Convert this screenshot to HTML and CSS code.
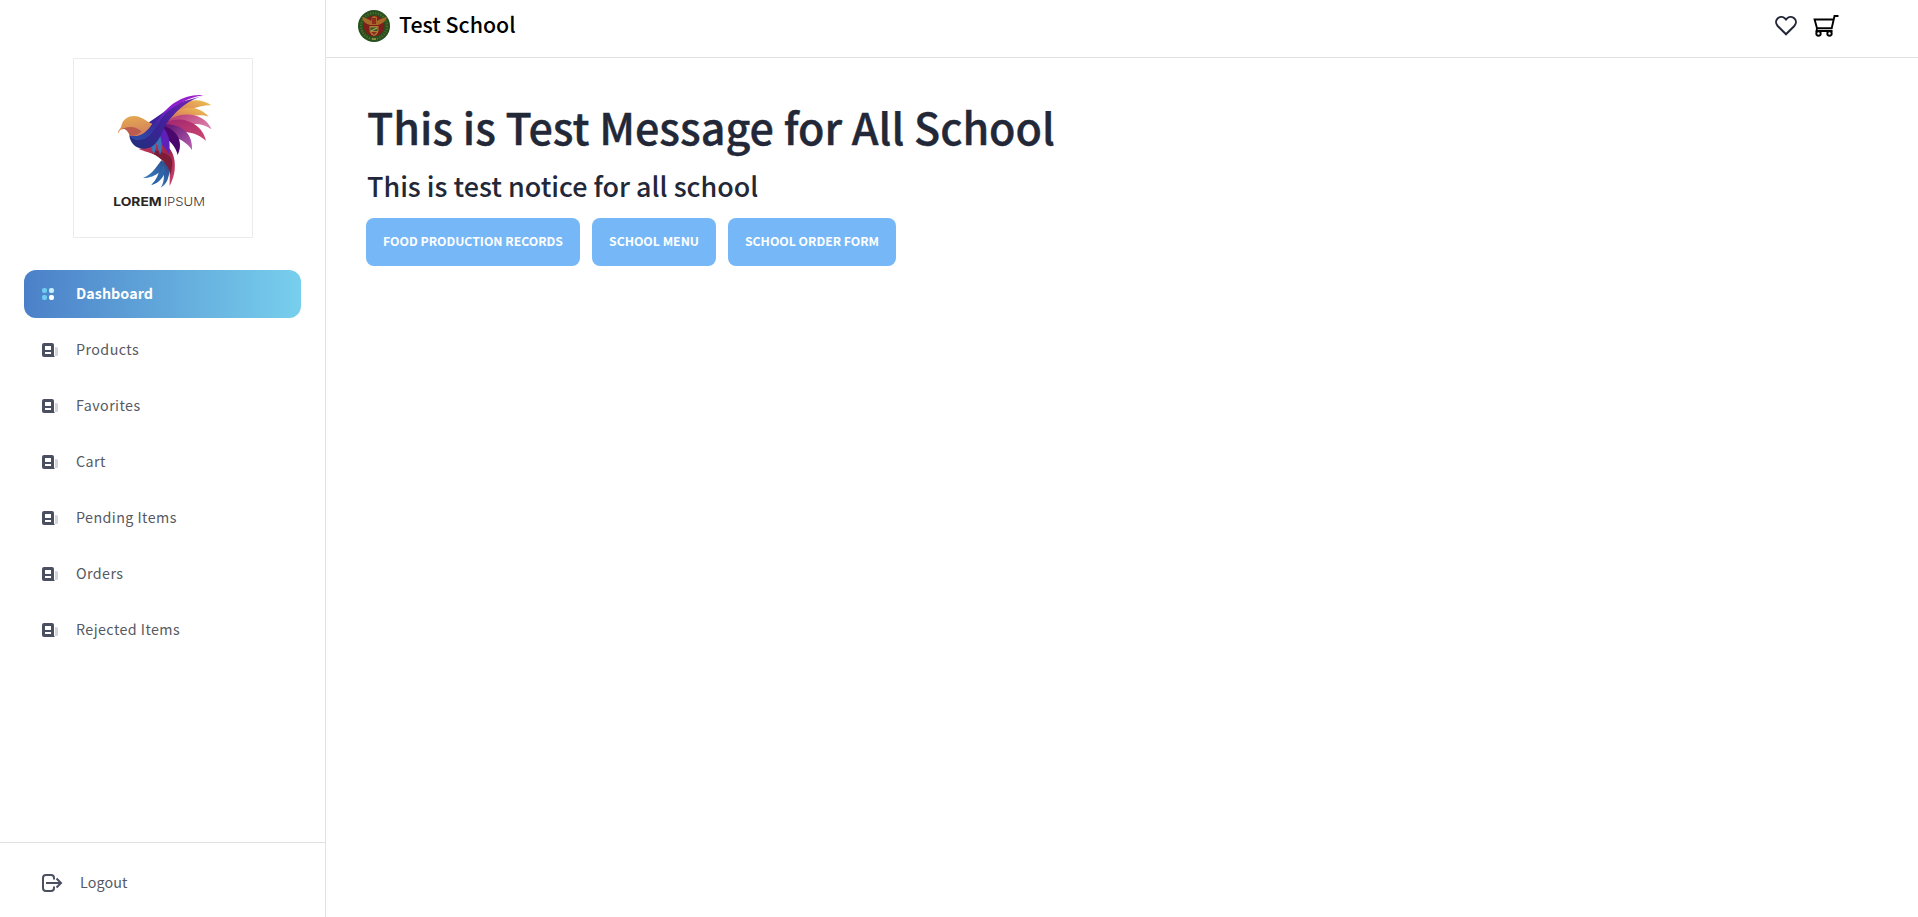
FILE: index.html
```html
<!DOCTYPE html>
<html lang="en">
<head>
<meta charset="utf-8">
<title>Test School</title>
<link rel="stylesheet" href="styles.css">
</head>
<body>
<svg class="defs" width="0" height="0">
  <symbol id="doc" viewBox="0 0 16 14">
    <path fill="#d5d5e0" d="M13 4h1.500A1.500 1.500 0 0 1 16 5.500v6a1.500 1.500 0 0 1-1.500 1.500H13z"/>
    <path fill="#4a5060" fill-rule="evenodd" d="M2 0h8a2 2 0 0 1 2 2v10q0 1.500 1 2H2a2 2 0 0 1-2-2V2a2 2 0 0 1 2-2zM3 3v4h6V3zM3 9v2h6V9z"/>
  </symbol>
</svg>
<div class="app">
  <aside class="sidebar">
    <div class="logo">
      <svg viewBox="39 24 540 540" width="180" height="180">
        <defs>
          <linearGradient id="head" x1="0" y1="0" x2="0.3" y2="1"><stop offset="0" stop-color="#e6ac50"/><stop offset="1" stop-color="#d4825c"/></linearGradient>
          <linearGradient id="sweep" x1="0" y1="1" x2="1" y2="0"><stop offset="0" stop-color="#2c50a4"/><stop offset=".35" stop-color="#3a2ca0"/><stop offset=".6" stop-color="#8a1ed0"/><stop offset="1" stop-color="#a01ec8"/></linearGradient>
          <linearGradient id="shade" x1="0" y1="1" x2="1" y2="0"><stop offset="0" stop-color="#20307c"/><stop offset=".5" stop-color="#42209c"/><stop offset="1" stop-color="#7a28b8"/></linearGradient>
          <linearGradient id="gold" x1="0" y1="1" x2="1" y2="0"><stop offset="0" stop-color="#c64c68"/><stop offset=".6" stop-color="#e39a58"/><stop offset="1" stop-color="#edc54e"/></linearGradient>
          <linearGradient id="pink" x1="0" y1="0" x2="1" y2=".5"><stop offset="0" stop-color="#b03068"/><stop offset="1" stop-color="#d878a8"/></linearGradient>
          <linearGradient id="rose" x1="0" y1="0" x2="1" y2="1"><stop offset="0" stop-color="#9c2470"/><stop offset="1" stop-color="#d04870"/></linearGradient>
          <linearGradient id="violet" x1="0" y1="0" x2="1" y2="1"><stop offset="0" stop-color="#5a0c70"/><stop offset="1" stop-color="#b864b0"/></linearGradient>
          <linearGradient id="tail" x1="1" y1="0" x2="0" y2="1"><stop offset="0" stop-color="#284888"/><stop offset="1" stop-color="#3e8cd0"/></linearGradient>
          <linearGradient id="belly" x1="0" y1="0" x2="1" y2="1"><stop offset="0" stop-color="#c83860"/><stop offset=".5" stop-color="#a02448"/><stop offset="1" stop-color="#cc4870"/></linearGradient>
        </defs>
        <path fill="url(#tail)" d="M304 331C288 352 276 374 249 384C270 384 286 376 296 368C290 386 284 394 274 405C294 400 306 386 312 374C312 390 309 402 302 413C320 402 325 386 328 368L328 346Z"/>
        <path fill="#2e64a8" d="M310 345C300 375 288 390 274 405C294 400 308 384 315 361Z"/>
        <path fill="url(#belly)" d="M236 297C260 292 280 272 307 279C335 291 348 322 344 360C341 382 335 396 329 408C328 392 332 377 326 358C315 326 280 310 254 304Z"/>
        <path fill="#7c1c38" d="M278 298C300 306 326 310 334 326C340 340 334 360 332 374C325 345 305 326 278 310Z"/>
        <path fill="url(#gold)" d="M325 205C350 150 412 137 454 166C432 166 408 170 388 182L345 210Z"/>
        <path fill="url(#gold)" d="M315 222C345 165 410 158 446 200C422 192 400 195 380 205L340 225Z"/>
        <path fill="url(#pink)" d="M305 228C345 180 430 180 455 238C430 220 402 219 375 226L330 238Z"/>
        <path fill="url(#rose)" d="M304 226C348 190 425 212 438 272C414 252 392 246 368 246L330 244Z"/>
        <path fill="url(#violet)" d="M303 226C348 214 400 240 396 300C380 278 362 267 340 262L306 240Z"/>
        <path fill="#4a086c" d="M302 228C340 230 376 268 353 315C347 290 332 276 306 252Z"/>
        <path fill="#5e20b8" d="M302 226C326 244 334 280 326 312C314 288 296 276 280 262Z"/>
        <path fill="#3878b8" d="M294 244C307 267 309 295 300 315C296 302 294 288 288 279C289 294 286 306 281 313C274 300 275 285 270 273Z"/>
        <path fill="url(#shade)" d="M208 257C211 282 232 298 254 296C304 292 300 235 336 200C356 177 385 149 430 137L350 160Z"/>
        <path fill="url(#sweep)" d="M207 252C274 272 288 192 346 157C374 140 402 133 430 136C382 143 354 164 325 182C296 204 286 255 250 268C230 274 214 268 207 252Z"/>
        <path fill="url(#head)" d="M174 250C173 241 181 238 184 228C188 208 204 198 222 198C247 199 256 214 277 221C262 246 238 263 212 257C204 249 203 241 194 237C184 236 180 239 174 250Z"/>
        <path fill="#bc5c50" d="M174 250C178 240 190 232 210 231C226 231 236 237 245 244C233 256 222 260 212 257C204 249 203 241 194 237C184 236 180 239 174 250Z"/>
        <text x="160" y="467" class="mark-bold" textLength="145" lengthAdjust="spacingAndGlyphs">LOREM</text>
        <text x="311" y="467" class="mark-thin" textLength="124" lengthAdjust="spacingAndGlyphs">IPSUM</text>
      </svg>
    </div>
    <nav class="menu">
      <a class="item active">
        <svg width="16" height="14" viewBox="0 0 16 14"><rect y="1" width="5" height="5" rx="2" fill="#6ecdf0"/><rect x="7" y="1" width="5" height="5" rx="2" fill="#c4f0fc"/><rect y="8" width="5" height="5" rx="2" fill="#6ecdf0"/><rect x="7" y="8" width="5" height="5" rx="2" fill="#fff"/></svg>
        <span>Dashboard</span></a>
      <a class="item"><svg width="16" height="14"><use href="#doc"/></svg><span>Products</span></a>
      <a class="item"><svg width="16" height="14"><use href="#doc"/></svg><span>Favorites</span></a>
      <a class="item"><svg width="16" height="14"><use href="#doc"/></svg><span>Cart</span></a>
      <a class="item"><svg width="16" height="14"><use href="#doc"/></svg><span>Pending Items</span></a>
      <a class="item"><svg width="16" height="14"><use href="#doc"/></svg><span>Orders</span></a>
      <a class="item"><svg width="16" height="14"><use href="#doc"/></svg><span>Rejected Items</span></a>
    </nav>
    <a class="logout">
      <svg width="21" height="18" viewBox="0 0 21 18" fill="none" stroke="#4a5060" stroke-width="2"><path d="M12 5.500V4Q12 1 9 1H4Q1 1 1 4v10q0 3 3 3h5q3 0 3-3v-1.500M4 9h15M14.500 4.500L19 9l-4.500 4.500"/></svg>
      <span>Logout</span>
    </a>
  </aside>
  <main class="main">
    <header class="topbar">
      <svg width="32" height="32" viewBox="0 0 32 32">
        <circle cx="16" cy="16" r="16" fill="#26501f"/>
        <circle cx="16" cy="16" r="13" fill="none" stroke="#8a8a3c" stroke-width="2.200" stroke-dasharray="1.200 1.500" opacity=".5"/>
        <circle cx="16" cy="16" r="10.500" fill="#7c1f1b"/>
        <path fill="#a8682a" d="M4 7C8 8 11 9 13 11L14 7L16 6L19 7L19 11C21 9 25 8 29 7C27 12 24 14 20 15H12C8 14 5 12 4 7Z"/>
        <path fill="#b07c34" d="M11.500 16h9v5q-1 4-4.500 5q-3.500-1-4.500-5z"/>
        <path fill="#315a30" d="M12.500 17.500h7v3.500h-7z"/>
        <path fill="#8e2c1e" d="M14 8h4v6h-4zM13 22h6l-3 3z"/>
        <path stroke="#d4b35c" fill="none" d="M13 21l6-3M14 29h4"/>
      </svg>
      <span class="school">Test School</span>
      <div class="actions">
        <svg width="22" height="20" viewBox="0 0 22 20" fill="none" stroke="#232838" stroke-width="2"><path d="M11 18.300L2.700 10C.5 7.600.6 4.400 2.600 2.500C4.800.5 8 .5 9.900 2.400L11 3.500l1.100-1.100C14 .5 17.200.5 19.400 2.500c2 1.900 2.100 5.100-.1 7.500z"/></svg>
        <svg width="26" height="22" viewBox="0 0 26 22" fill="none" stroke="#000" stroke-width="1.900"><path d="M25.500 1h-4l-2.800 12.200H4L1.600 4.500H20.500M4 13.200l-.5 2.800h16"/><circle cx="5.500" cy="18.500" r="2.200"/><circle cx="16.500" cy="18.500" r="2.200"/></svg>
      </div>
    </header>
    <section class="content">
      <h1>This is Test Message for All School</h1>
      <h2>This is test notice for all school</h2>
      <div class="buttons">
        <a class="btn b1">FOOD PRODUCTION RECORDS</a>
        <a class="btn b2">SCHOOL MENU</a>
        <a class="btn b3">SCHOOL ORDER FORM</a>
      </div>
    </section>
  </main>
</div>
</body>
</html>
```
FILE: styles.css
```css
* { box-sizing: border-box; }
body { margin: 0; background: #fff; font-family: "Noto Sans CJK SC", "Noto Sans", sans-serif; overflow: hidden; }
svg { display: block; flex: none; }
.defs { position: absolute; }
.app { display: flex; width: 1918px; height: 917px; }
.sidebar { width: 326px; border-right: 1px solid #e2e2e2; display: flex; flex-direction: column; padding-top: 58px; }
.logo { width: 180px; height: 180px; margin: 0 auto 32px 73px; outline: 1px solid #ececec; outline-offset: -1px; }
.mark-bold { font: 700 36px Inter, sans-serif; fill: #2c2422; }
.mark-thin { font: 300 36px Inter, sans-serif; fill: #3c3634; }
.menu { padding: 0 24px; display: flex; flex-direction: column; gap: 8px; flex: 1; }
.item { height: 48px; display: flex; align-items: center; padding-left: 18px; gap: 18px; color: #555962; font-size: 14.300px; line-height: 20px; letter-spacing: .42px; border-radius: 12px; width: 277px; }
.item span, .logout span { padding-bottom: 2px; }
.active { background: linear-gradient(90deg, #4b80c8, #78cfed); color: #fff; font-weight: 700; font-size: 14.300px; letter-spacing: .05px; }
.logout { height: 75px; border-top: 1px solid #e2e2e2; display: flex; align-items: center; padding: 5px 0 0 42px; gap: 17px; color: #555962; font-size: 14.300px; line-height: 20px; letter-spacing: .1px; }
.main { flex: 1; }
.topbar { height: 58px; border-bottom: 1px solid #e2e2e2; display: flex; align-items: center; padding: 0 79px 5px 32px; }
.school { margin-left: 9px; padding-bottom: 4px; font-size: 21.400px; line-height: 30px; font-weight: 500; color: #000; }
.actions { margin-left: auto; display: flex; align-items: center; gap: 16px; }
.content { padding: 39px 40px; color: #232838; }
h1 { margin: 0 0 0 1px; font-size: 43.050px; line-height: 58px; font-weight: 500; white-space: nowrap; -webkit-text-stroke: .4px #232838; }
h2 { margin: 14px 0 15px 1px; font-size: 26.900px; line-height: 34px; font-weight: 500; }
.buttons { display: flex; gap: 12px; }
.btn { height: 48px; border-radius: 8px; background: #76b8f7; color: #fff; font-size: 12.250px; font-weight: 700; display: flex; align-items: center; justify-content: center; white-space: nowrap; padding-bottom: 2px; }
.b1 { width: 214px; }
.b2 { width: 124px; }
.b3 { width: 168px; }
```
